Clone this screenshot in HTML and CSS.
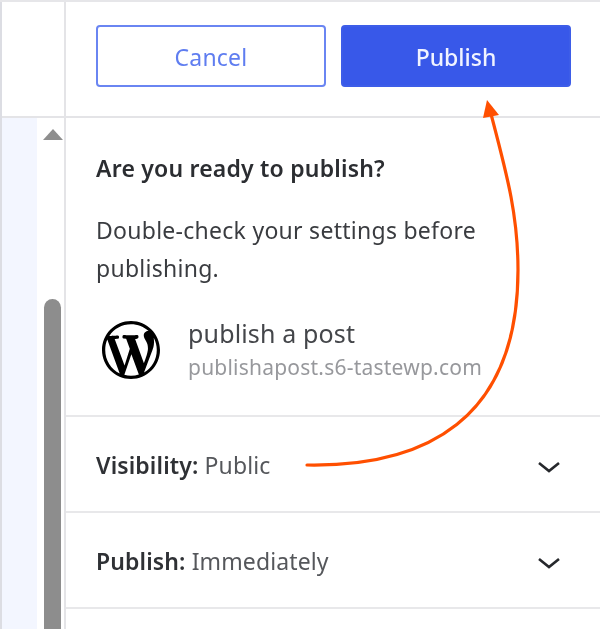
FILE: index.html
```html
<!DOCTYPE html>
<html lang="en">
<head>
<meta charset="utf-8">
<title>Publish panel</title>
<link rel="stylesheet" href="styles.css">
</head>
<body>
<div class="page">
  <div class="rail">
    <div class="rail-top"></div>
    <div class="rail-body">
      <div class="canvas"></div>
      <div class="scrollbar">
        <div class="scroll-up"></div>
        <div class="scroll-thumb"></div>
      </div>
    </div>
  </div>
  <main class="panel">
    <header class="actions">
      <button class="btn btn-cancel">Cancel</button>
      <button class="btn btn-publish">Publish</button>
    </header>
    <section class="intro">
      <p class="intro-title">Are you ready to publish?</p>
      <p class="intro-text">Double-check your settings before publishing.</p>
      <div class="site">
        <svg class="site-logo" viewBox="0 0 20 20" aria-hidden="true"><path d="M20 10c0-5.51-4.49-10-10-10C4.48 0 0 4.49 0 10c0 5.52 4.48 10 10 10 5.51 0 10-4.48 10-10zM7.78 15.37L4.37 6.22c.55-.02 1.17-.08 1.17-.08.5-.06.44-1.13-.06-1.11 0 0-1.45.11-2.37.11-.18 0-.37 0-.58-.01C4.12 2.69 6.87 1.11 10 1.11c2.33 0 4.45.87 6.05 2.34-.68-.11-1.65.39-1.65 1.58 0 .74.45 1.36.9 2.1.35.61.55 1.36.55 2.46 0 1.49-1.4 5-1.4 5l-3.03-8.37c.54-.02.82-.17.82-.17.5-.05.44-1.25-.06-1.22 0 0-1.44.12-2.38.12-.87 0-2.33-.12-2.33-.12-.5-.03-.56 1.2-.06 1.22l.92.08 1.26 3.41zM17.41 10c.24-.64.74-1.87.43-4.25.7 1.29 1.05 2.71 1.05 4.25 0 3.29-1.73 6.24-4.4 7.78.97-2.59 1.94-5.2 2.92-7.78zM6.1 18.09C3.12 16.65 1.11 13.53 1.11 10c0-1.3.23-2.48.72-3.59C3.25 10.3 4.67 14.2 6.1 18.09zm4.03-6.63l2.58 6.98c-.86.29-1.76.45-2.71.45-.79 0-1.57-.11-2.29-.33.81-2.38 1.62-4.74 2.42-7.1z"/></svg>
        <div class="site-info">
          <div class="site-name">publish a post</div>
          <div class="site-url">publishapost.s6-tastewp.com</div>
        </div>
      </div>
    </section>
    <section class="row">
      <span class="row-label"><b>Visibility:</b> Public</span>
      <svg class="chevron" viewBox="0 0 24 24" aria-hidden="true"><path d="M2 7l10 8 10-8"/></svg>
    </section>
    <section class="row">
      <span class="row-label"><b>Publish:</b> Immediately</span>
      <svg class="chevron" viewBox="0 0 24 24" aria-hidden="true"><path d="M2 7l10 8 10-8"/></svg>
    </section>
  </main>
  <svg class="annotation" viewBox="0 0 600 629" aria-hidden="true">
    <path class="annotation-line" d="M307 465C425 467 518 420 518 270C518 215 507 175 491 114"/>
    <path class="annotation-head" d="M487 100L483 118L499 115Z"/>
  </svg>
</div>
</body>
</html>
```
FILE: styles.css
```css
* { box-sizing: border-box; }
html, body { margin: 0; padding: 0; background: #fff; }
body { font-family: "Noto Sans", sans-serif; color: #2b2d31; }

.page {
  position: relative;
  display: flex;
  width: 600px;
  height: 629px;
  overflow: hidden;
  border-top: 2px solid #e6e6e9;
  filter: blur(0.4px);
}

.rail {
  width: 66px;
  flex: none;
  display: flex;
  flex-direction: column;
  border-left: 2px solid #dcdde3;
  border-right: 2px solid #e4e4e7;
}
.rail-top { height: 116px; flex: none; border-bottom: 2px solid #e4e4e7; }
.rail-body { flex: 1; display: flex; min-height: 0; }
.canvas { width: 35px; flex: none; background: #f3f6ff; }
.scrollbar { flex: 1; display: flex; flex-direction: column; align-items: center; padding-left: 4px; }
.scroll-up {
  width: 0;
  height: 0;
  margin-top: 11px;
  border-left: 10.5px solid transparent;
  border-right: 10.5px solid transparent;
  border-bottom: 11px solid #8e8e8e;
}
.scroll-thumb {
  width: 17px;
  height: 400px;
  margin-top: 159px;
  background: #8d8d8d;
  border-radius: 8.5px 8.5px 0 0;
}

.panel { flex: 1; min-width: 0; }
.actions {
  height: 116px;
  padding: 23px 29px 0 30px;
  display: flex;
  gap: 15px;
  border-bottom: 2px solid #e4e4e7;
}
.btn {
  width: 230px;
  height: 62px;
  padding: 1px 0 0;
  border-radius: 4px;
  font: 400 23px "Noto Sans", sans-serif;
  letter-spacing: 0.2px;
  cursor: pointer;
}
.btn-cancel { background: #fff; border: 2px solid #6a85f2; color: #5f7df0; }
.btn-publish { background: #3858e9; border: 2px solid #3d5de8; color: #f0f3ff; font-weight: 500; letter-spacing: 0; }

.intro {
  height: 299px;
  padding: 35px 30px 0;
  border-bottom: 2px solid #e8e8ea;
}
.intro-title { margin: 0; font-size: 23px; line-height: 30px; font-weight: 600; letter-spacing: 0.2px; }
.intro-text { margin: 28px 0 0; width: 410px; font-size: 23px; line-height: 38px; letter-spacing: 0.27px; color: #3a3c40; }
.site { display: flex; align-items: center; margin-top: 29px; gap: 28px; padding-left: 6px; }
.site-logo { width: 58px; height: 58px; fill: #000; flex: none; }
.site-name { font-size: 25px; line-height: 34px; letter-spacing: 0.15px; color: #44464a; }
.site-url { font-size: 21px; line-height: 34px; letter-spacing: 0.22px; color: #97989c; }

.row {
  height: 96px;
  padding: 0 39px 0 30px;
  display: flex;
  align-items: center;
  justify-content: space-between;
  border-bottom: 2px solid #e8e8ea;
}
.row-label { padding-top: 2px; font-size: 23px; letter-spacing: 0.12px; color: #55575b; }
.row-label b { font-weight: 600; color: #2f3135; }
.chevron { width: 24px; height: 24px; margin-top: 7px; fill: none; stroke: #26282c; stroke-width: 2.6; }

.annotation { position: absolute; left: 0; top: -2px; width: 600px; height: 629px; pointer-events: none; }
.annotation-line { fill: none; stroke: #ff4f00; stroke-width: 3.2; stroke-linecap: round; }
.annotation-head { fill: #ff4f00; }
```
